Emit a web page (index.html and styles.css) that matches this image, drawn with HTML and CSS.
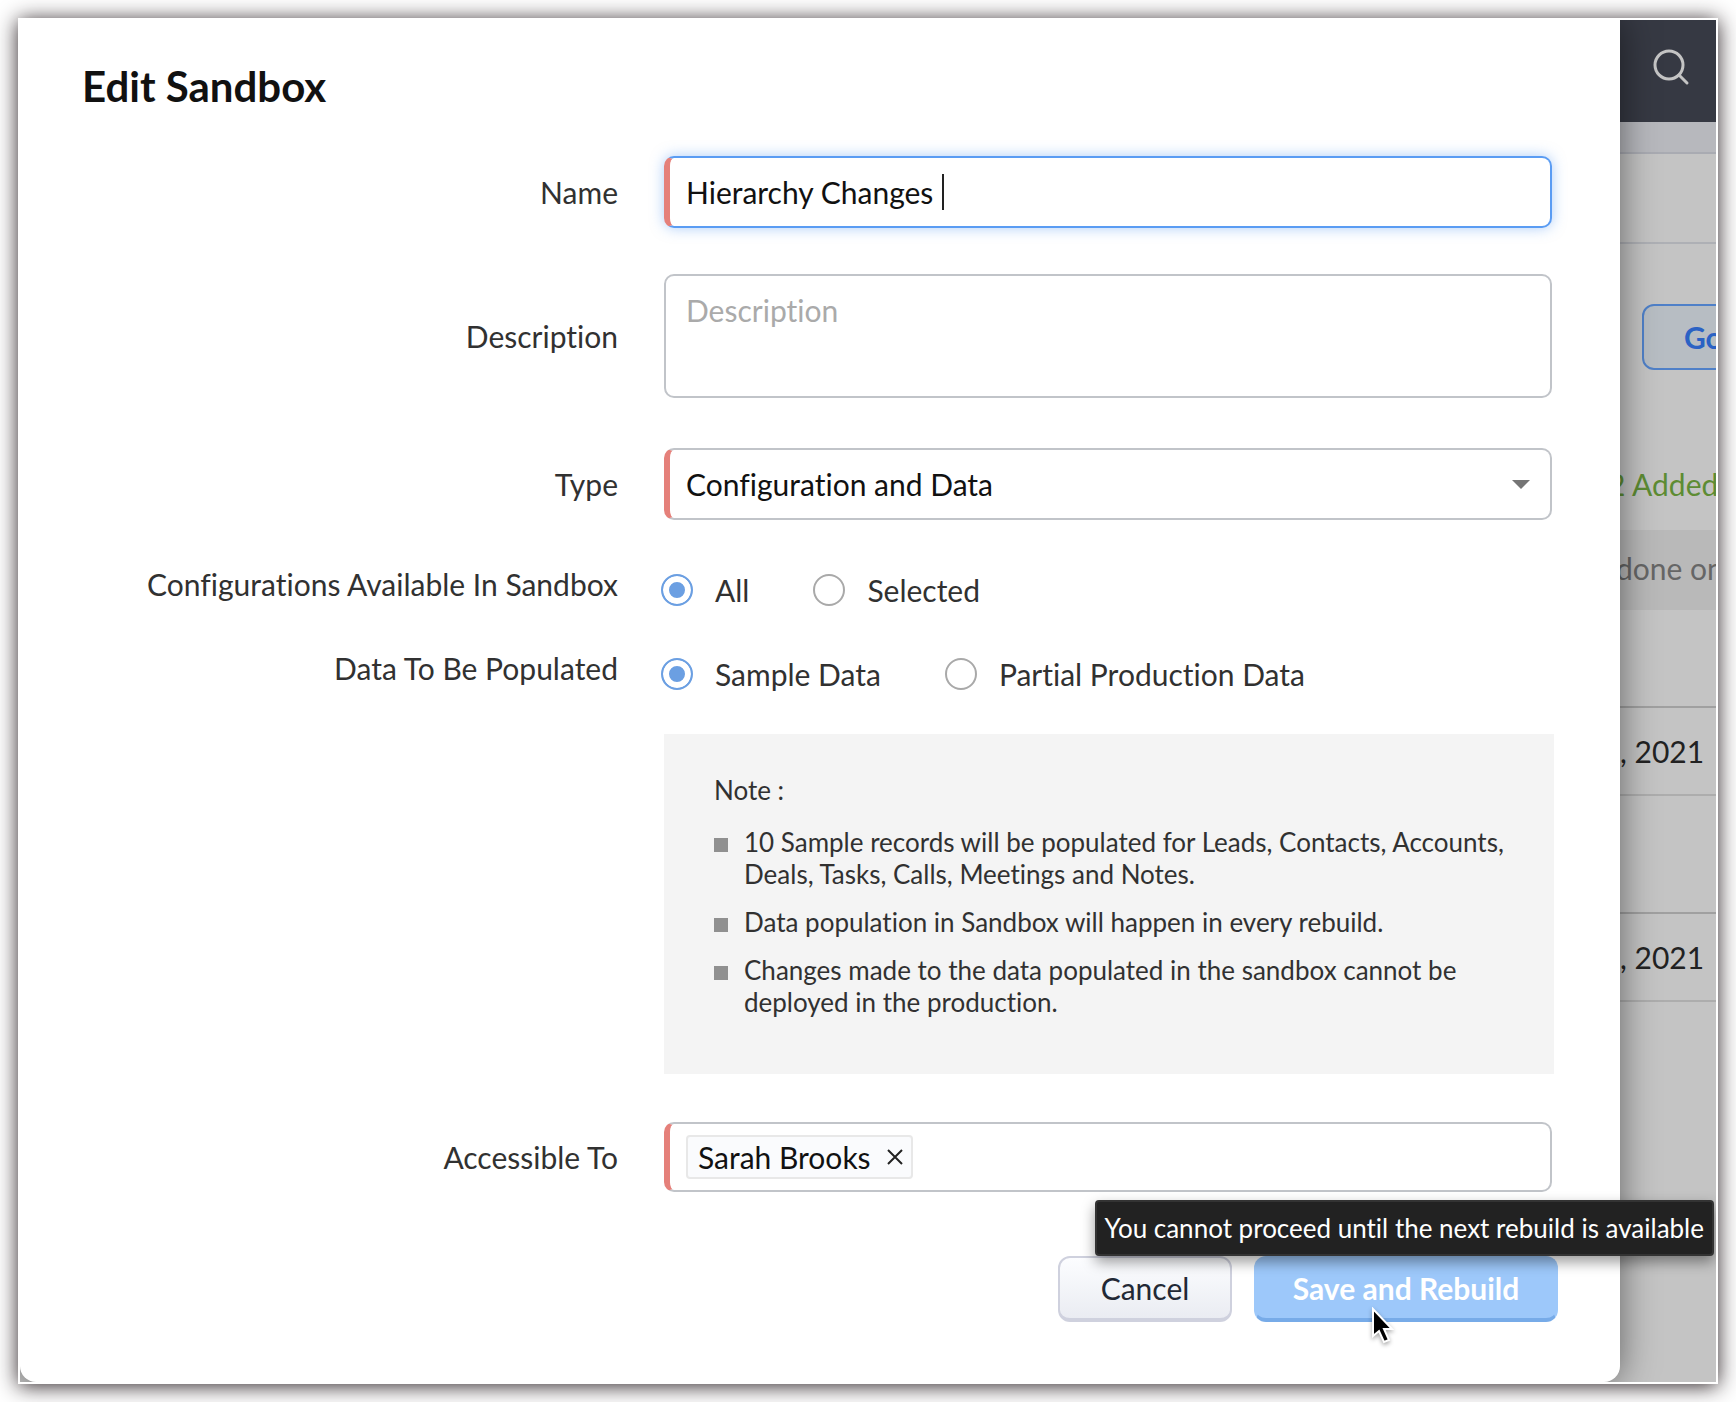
FILE: index.html
```html
<!DOCTYPE html>
<html lang="en">
<head>
    <meta charset="UTF-8">
    <title>Edit Sandbox</title>
    <link rel="stylesheet" href="styles.css">
</head>
<body>
    <div class="window">
        <!--dialog-->
        <form class="dialog">
            <h1>Edit Sandbox</h1>

            <div class="row row-name">
                <label class="label" for="name">Name</label>
                <div class="control">
                    <input class="field required focus" id="name" type="text" value="Hierarchy Changes ">
                    <span class="caret"></span>
                </div>
            </div>

            <div class="row row-desc">
                <label class="label" for="desc">Description</label>
                <textarea class="field" id="desc" placeholder="Description"></textarea>
            </div>

            <div class="row row-type">
                <label class="label" for="type">Type</label>
                <div class="control">
                    <select class="field required" id="type">
                        <option>Configuration and Data</option>
                    </select>
                    <span class="arrow"></span>
                </div>
            </div>

            <div class="row row-radio" role="radiogroup" aria-labelledby="conf-label">
                <span class="label" id="conf-label">Configurations Available In Sandbox</span>
                <div class="radios">
                    <label><input type="radio" name="conf" checked>All</label>
                    <label><input type="radio" name="conf">Selected</label>
                </div>
            </div>

            <div class="row row-radio" role="radiogroup" aria-labelledby="data-label">
                <span class="label" id="data-label">Data To Be Populated</span>
                <div class="radios">
                    <label><input type="radio" name="data" checked>Sample Data</label>
                    <label><input type="radio" name="data">Partial Production Data</label>
                </div>
            </div>

            <div class="row row-note">
                <div class="note">
                    <p>Note :</p>
                    <ul>
                        <li>10 Sample records will be populated for Leads, Contacts, Accounts, Deals, Tasks, Calls, Meetings and Notes.</li>
                        <li>Data population in Sandbox will happen in every rebuild.</li>
                        <li>Changes made to the data populated in the sandbox cannot be deployed in the production.</li>
                    </ul>
                </div>
            </div>

            <div class="row row-access">
                <span class="label">Accessible To</span>
                <div class="field required tags">
                    <span class="tag">Sarah Brooks
                        <button type="button" class="remove" aria-label="Remove">
                            <svg width="16" height="16" viewBox="0 0 16 16"><path d="M1 1L15 15M15 1L1 15" stroke="#222" stroke-width="2" fill="none"/></svg>
                        </button>
                    </span>
                </div>
            </div>

            <div class="actions">
                <button type="button" class="btn cancel">Cancel</button>
                <div class="save-wrap">
                    <button type="submit" class="btn save">Save and Rebuild</button>
                    <span class="tooltip" role="tooltip">You cannot proceed until the next rebuild is available</span>
                    <svg class="cursor" width="26" height="40" viewBox="0 0 26 40">
                        <path d="M2 2V29L8 24L13 35L18 33L13 22H21Z" fill="#000" stroke="#fff" stroke-width="2"/>
                    </svg>
                </div>
            </div>
        </form>

        <!--page behind the dialog-->
        <div class="page">
            <div class="topbar">
                <svg width="38" height="38" viewBox="0 0 38 38" fill="none" stroke="#c4c4c4" stroke-width="3" stroke-linecap="round">
                    <circle cx="17" cy="17" r="14"/>
                    <path d="M27 27L35 35"/>
                </svg>
            </div>
            <div class="tabs"></div>
            <div class="toolbar"></div>
            <div class="summary">
                <button type="button" class="go">Go to Sandbox</button>
                <div class="added">2 Added</div>
            </div>
            <div class="info">done on</div>
            <div class="date">, 2021</div>
            <div class="date">, 2021</div>
        </div>
    </div>
</body>
</html>
```
FILE: styles.css
```css
* {
    box-sizing: border-box;
    margin: 0;
    padding: 0;
}

body {
    padding: 18px;
    background: #fff;
    font-family: Lato, "Liberation Sans", sans-serif;
    font-size: 30px;
    line-height: 36px;
    font-variant-ligatures: none;
    color: #313131;
}

input, textarea, select, button {
    font: inherit;
    font-variant-ligatures: none;
    color: inherit;
}

.window {
    display: flex;
    border: 2px solid #fff;
    background: #c4c4c4;
    box-shadow: 0 2px 20px rgba(35, 25, 28, 0.95);
    overflow: hidden;
}

/* dialog */
.dialog {
    position: relative;
    z-index: 1;
    flex: 1;
    padding: 40px 62px 60px 60px;
    background: #fff;
    border-radius: 0 0 16px 16px;
    box-shadow: 0 0 36px rgba(0, 0, 0, 0.5);
}

h1 {
    margin-bottom: 44px;
    padding-left: 2px;
    font-size: 42px;
    line-height: 52px;
    color: #111;
}

.row {
    display: grid;
    grid-template-columns: 538px 1fr;
    column-gap: 46px;
    align-items: center;
    padding-right: 6px;
}

.label {
    text-align: right;
}

.control {
    position: relative;
}

.field {
    display: block;
    width: 100%;
    height: 72px;
    padding: 0 20px;
    border: 2px solid #c1c4c9;
    border-radius: 10px;
    background: #fff;
    color: #111;
    outline: none;
    appearance: none;
}

.required {
    padding-left: 16px;
    border-left: 6px solid #e5807a;
}

.focus {
    border-color: #5a9cf3;
    border-left-color: #e5807a;
    box-shadow: 0 0 14px rgba(90, 156, 243, 0.5);
}

.caret {
    position: absolute;
    top: 18px;
    left: 278px;
    width: 2px;
    height: 36px;
    background: #222;
}

textarea.field {
    height: 124px;
    padding: 16px 20px;
    resize: none;
}

textarea::placeholder {
    color: #aaa;
}

.arrow {
    position: absolute;
    top: 32px;
    right: 22px;
    border: 9px solid transparent;
    border-top-color: #757575;
    border-bottom: 0;
}

.row-desc {
    margin-top: 46px;
}

.row-type {
    margin-top: 50px;
}

.row-radio {
    align-items: start;
    margin-top: 46px;
}

.radios {
    display: flex;
    gap: 64px;
    padding-top: 6px;
    margin-left: -3px;
}

.radios label {
    display: flex;
    align-items: center;
    gap: 22px;
}

.radios input {
    width: 32px;
    height: 32px;
    border: 2px solid #a9a9a9;
    border-radius: 50%;
    appearance: none;
}

.radios input:checked {
    border-color: #6b9fe2;
    background: #6b9fe2;
    box-shadow: inset 0 0 0 6px #fff;
}

.row-radio + .row-radio {
    margin-top: 42px;
}

.note {
    grid-column: 2;
    margin: 42px -2px 48px 0;
    padding: 40px 50px 56px;
    background: #f4f4f4;
    font-size: 26px;
    line-height: 32px;
}

.note ul {
    display: grid;
    gap: 16px;
    margin-top: 20px;
    list-style: none;
}

.note li {
    display: flex;
    gap: 16px;
}

.note li::before {
    content: "";
    flex: none;
    width: 14px;
    height: 14px;
    margin-top: 12px;
    background: #909090;
}

.tags {
    display: flex;
    align-items: center;
    height: 70px;
}

.tag {
    display: flex;
    align-items: center;
    gap: 16px;
    height: 44px;
    padding: 0 8px 0 10px;
    border: 2px solid #e8e8e8;
    border-radius: 4px;
    background: #fafbfd;
}

.remove {
    display: flex;
    border: 0;
    background: none;
}

.actions {
    display: flex;
    justify-content: flex-end;
    gap: 22px;
    margin-top: 64px;
}

.btn {
    display: block;
    height: 66px;
    padding: 0 36px;
    border: 2px solid #cfd1de;
    border-bottom-width: 4px;
    border-radius: 12px;
    background: linear-gradient(#fcfdff, #eaecf2);
    color: #222835;
}

.cancel {
    min-width: 174px;
}

.save-wrap {
    position: relative;
}

.save {
    min-width: 304px;
    border-color: #9dc8fa;
    border-bottom-color: #77abe8;
    background: #9dc8fa;
    color: #fff;
    font-weight: bold;
}

.tooltip {
    position: absolute;
    right: -156px;
    bottom: 100%;
    height: 56px;
    padding: 0 8px;
    border: 2px solid #333;
    border-radius: 4px;
    background: #222;
    box-shadow: 0 6px 14px rgba(0, 0, 0, 0.4);
    color: #fff;
    font-size: 26px;
    line-height: 52px;
    white-space: nowrap;
}

.cursor {
    position: absolute;
    top: 51px;
    left: 117px;
    filter: drop-shadow(0 2px 2px rgba(0, 0, 0, 0.35));
}

/* page behind */
.page {
    width: 96px;
    overflow: hidden;
    white-space: nowrap;
}

.topbar {
    height: 102px;
    padding: 28px 0 0 32px;
    background: #363943;
}

.tabs {
    height: 32px;
    border-bottom: 2px solid #a9abb2;
    background: #b7b8bd;
}

.toolbar {
    height: 90px;
    border-bottom: 2px solid #aeb0b5;
}

.summary {
    height: 286px;
    padding-top: 60px;
}

.go {
    height: 66px;
    margin-left: 22px;
    padding: 0 40px;
    border: 2px solid #4f80c8;
    border-radius: 12px;
    background: #b7bdc3;
    color: #2b62c4;
    font-weight: bold;
}

.added {
    margin: 96px 0 0 -12px;
    color: #5d8c33;
}

.info {
    height: 80px;
    margin: 0 0 96px -4px;
    background: #b9b9b9;
    color: #666;
    line-height: 76px;
}

.date {
    height: 90px;
    margin-bottom: 116px;
    padding-right: 20px;
    border-top: 2px solid #a0a0a0;
    border-bottom: 2px solid #adadad;
    color: #222;
    line-height: 86px;
    text-align: right;
}
```
